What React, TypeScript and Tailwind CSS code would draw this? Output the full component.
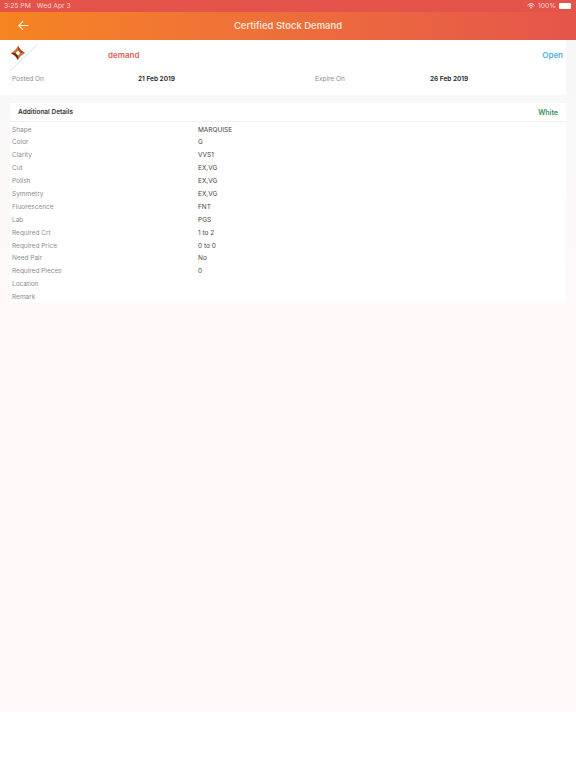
import React from 'react';

const details: [string, string][] = [
  ['Shape', 'MARQUISE'],
  ['Color', 'G'],
  ['Clarity', 'VVS1'],
  ['Cut', 'EX,VG'],
  ['Polish', 'EX,VG'],
  ['Symmetry', 'EX,VG'],
  ['Fluorescence', 'FNT'],
  ['Lab', 'PGS'],
  ['Required Crt', '1 to 2'],
  ['Required Price', '0 to 0'],
  ['Need Pair', 'No'],
  ['Required Pieces', '0'],
  ['Location', ''],
  ['Remark', ''],
];

const Logo = () => (
  <svg width="30" height="30" viewBox="0 0 30 30" className="shrink-0">
    <line x1="1" y1="29" x2="28" y2="3" stroke="#d4d4d4" strokeWidth="0.8" />
    <path d="M9 4 L11.4 7.6 L12.4 8.6 L16 11 L12.4 13.4 L11.4 14.4 L9 18 L6.6 14.4 L5.6 13.4 L2 11 L5.6 8.6 L6.6 7.6 Z" fill="#d2702f" />
    <path d="M2 11 L5.6 13.4 L6.6 14.4 L9 18 L9 13.5 L6.5 11 Z" fill="#5f2f22" />
    <path d="M9 4 L9 8.5 L11.5 11 L16 11 L12.4 8.6 L11.4 7.6 Z" fill="#a8492a" />
    <path d="M9 8.6 L11.4 11 L9 13.4 L6.6 11 Z" fill="#fdf6ee" />
  </svg>
);

const App: React.FC = () => {
  return (
    <div className="flex h-[768px] w-[576px] flex-col overflow-hidden bg-white font-['Inter',sans-serif]">
      <div className="flex h-[12px] items-center justify-between bg-[#e4534a] pl-[4px] pr-[5px] text-[6.8px] text-[#fbd5cd]">
        <div className="flex gap-[6px]">
          <span>3:25 PM</span>
          <span>Wed Apr 3</span>
        </div>
        <div className="flex items-center gap-[3px]">
          <svg width="8" height="6" viewBox="0 0 16 12" fill="none" stroke="#fff" strokeWidth="1.8">
            <path d="M1 4.5 C5 0.5 11 0.5 15 4.5 M3.5 7 C6 4.6 10 4.6 12.5 7" />
            <path d="M6 9.2 C7.2 8.2 8.8 8.2 10 9.2 L8 11.5 Z" fill="#fff" stroke="none" />
          </svg>
          <span>100%</span>
          <span className="h-[6px] w-[12px] rounded-[1px] bg-white" />
        </div>
      </div>

      <div className="relative flex h-[28px] items-center justify-center bg-gradient-to-r from-[#f6841f] to-[#e5554a]">
        <svg className="absolute left-[18px] top-[8px]" width="11" height="11" viewBox="0 0 11 11" fill="none" stroke="#fff3dc" strokeWidth="1.1">
          <path d="M10.5 5.5 H1 M5 1.2 L0.8 5.5 L5 9.8" />
        </svg>
        <span className="text-[9.5px] font-medium text-[#ffeede]">Certified Stock Demand</span>
      </div>

      <div className="flex flex-1 flex-col bg-[#fff9f9]">
        <div className="flex flex-col gap-[8px] bg-gradient-to-b from-[#f7f7f7] to-[#fff9f9]">
          <div className="mr-[10px] h-[55px] rounded-br-[2px] bg-white pl-[9px]">
            <div className="flex h-[32px] items-start">
              <div className="mt-[2px]">
                <Logo />
              </div>
              <span className="ml-[69px] mt-[9px] text-[8px] font-semibold text-[#dc6156]">demand</span>
              <span className="ml-auto mr-[3px] mt-[9px] text-[8px] font-semibold text-[#4fb0de]">Open</span>
            </div>
            <div className="flex h-[13px] items-center pt-[2px] text-[6.5px]">
              <span className="w-[129px] pl-[3px] text-[#8c8c8c]">Posted On</span>
              <span className="w-[177px] font-semibold text-[#222222]">21 Feb 2019</span>
              <span className="w-[115px] text-[#8c8c8c]">Expire On</span>
              <span className="font-semibold text-[#222222]">26 Feb 2019</span>
            </div>
          </div>

          <div className="mx-[10px] flex h-[200px] flex-col rounded-[2px] bg-white">
            <div className="flex h-[19px] shrink-0 items-center justify-between border-b border-[#f0f0f0] px-[8px] pt-[2px] text-[6.5px] font-semibold">
              <span className="text-[#333333]">Additional Details</span>
              <span className="text-[7px] text-[#37905a]">White</span>
            </div>
            <div className="flex flex-col pt-[2px]">
              {details.map(([label, value]) => (
                <div key={label} className="flex h-[12.9px] items-center text-[6.5px]">
                  <span className="w-[188px] pl-[2px] text-[#8c8c8c]">{label}</span>
                  <span className="text-[#444444]">{value}</span>
                </div>
              ))}
            </div>
          </div>
        </div>
        <div className="flex-1" />
        <div className="h-[56px] shrink-0 bg-white" />
      </div>
    </div>
  );
};

export default App;
